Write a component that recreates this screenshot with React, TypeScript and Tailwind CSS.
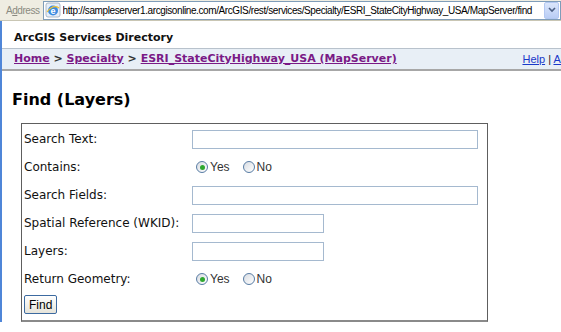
const Radio = ({ checked, label }: { checked?: boolean; label: string }) => (
  <label className="flex items-center mr-[13px]">
    <span className="w-[12px] h-[12px] rounded-full border border-[#587ca4] bg-gradient-to-br from-[#d8dce2] to-white flex items-center justify-center">
      {checked && <span className="w-[5px] h-[5px] rounded-full bg-[#2fa82f]" />}
    </span>
    <span className="ml-[2px] text-[12px] text-[#333]" style={{ fontFamily: '"Liberation Sans", Arial, sans-serif' }}>
      {label}
    </span>
  </label>
);

const Row = ({ label, children }: { label: string; children: React.ReactNode }) => (
  <div className="flex items-center h-[28px]">
    <div className="w-[168px] shrink-0">{label}</div>
    <div className="flex items-center">{children}</div>
  </div>
);

const TextBox = ({ w }: { w: string }) => (
  <input type="text" className={`${w} h-[19px] border border-[#a5b9cf] bg-white outline-none`} />
);

export default function App() {
  return (
    <div className="w-[561px] h-[332px] overflow-hidden bg-white relative" style={{ fontFamily: '"DejaVu Sans", Verdana, sans-serif' }}>
      {/* browser address bar */}
      <div className="h-[21px] bg-[#efede2] border-b border-[#c9c6b4] flex items-center">
        <span className="ml-[6px] mr-[3px] shrink-0 text-[10px] tracking-[-0.45px] text-[#8a8a80]" style={{ fontFamily: '"Liberation Sans", Tahoma, sans-serif' }}>
          A<span className="underline">d</span>dress
        </span>
        <div className="flex-1 min-w-0 h-[19px] border border-[#7f9db9] bg-white flex items-center">
          <svg width="16" height="16" viewBox="0 0 16 16" className="ml-[1px] shrink-0">
            <rect x="1" y="1" width="14" height="14" rx="2" fill="#e6eef8" stroke="#9ab" strokeWidth="0.8" />
            <circle cx="8" cy="8.5" r="5" fill="#3b8be0" />
            <text x="8" y="12" textAnchor="middle" fontSize="9" fontWeight="bold" fill="#fff" fontFamily="Liberation Sans">e</text>
            <path d="M2 10 Q8 2 14 6" fill="none" stroke="#f1c232" strokeWidth="1.2" />
          </svg>
          <span className="ml-[2px] flex-1 min-w-0 overflow-hidden text-[10px] tracking-[-0.4px] text-black whitespace-nowrap" style={{ fontFamily: '"Liberation Sans", Tahoma, sans-serif' }}>
            http://sampleserver1.arcgisonline.com/ArcGIS/rest/services/Specialty/ESRI_StateCityHighway_USA/MapServer/find
          </span>
          <div className="w-[15px] h-[17px] mr-[1px] shrink-0 rounded-[2px] bg-gradient-to-b from-[#dbe6fb] to-[#b9cdf5] border border-[#b3c8f2] flex items-center justify-center">
            <svg width="8" height="6" viewBox="0 0 8 6">
              <path d="M1 1 L4 4 L7 1" fill="none" stroke="#4d6185" strokeWidth="1.6" />
            </svg>
          </div>
        </div>
      </div>

      {/* page */}
      <div className="flex">
        <div className="w-[2px] bg-[#4f86d8] self-stretch" />
        <div className="flex-1">
          <div className="h-[27px] pt-[10px] pl-[12px] text-[11px] leading-[13px] font-bold text-[#111]">
            ArcGIS Services Directory
          </div>
          <div className="h-[23px] bg-[#e8eff6] border-t border-[#b8c2cc] border-b-2 border-b-[#a7a7a7] flex items-center justify-between pl-[12px] whitespace-nowrap">
            <div className="text-[11px] font-bold text-[#333]">
              <a className="text-[#7a1a86] underline">Home</a> &gt; <a className="text-[#7a1a86] underline">Specialty</a> &gt;{' '}
              <a className="text-[#7a1a86] underline">ESRI_StateCityHighway_USA (MapServer)</a>
            </div>
            <div className="text-[11px] text-[#222] mr-[-64px]" style={{ fontFamily: '"Liberation Sans", Tahoma, sans-serif' }}>
              <a className="text-[#1a39c9] underline">Help</a> | <a className="text-[#1a39c9] underline">API Reference</a>
            </div>
          </div>

          <h2 className="mt-[19px] ml-[10px] text-[16px] font-bold text-black leading-[20px]">Find (Layers)</h2>

          <div className="mt-[13px] ml-[19px] w-[467px] h-[199px] border border-[#5e5e5e] border-b-2 border-b-[#8a8a8a] pt-[1px] pl-[2px] text-[12px] text-[#111]">
            <Row label="Search Text:"><TextBox w="w-[286px]" /></Row>
            <Row label="Contains:">
              <span className="ml-[4px] flex"><Radio checked label="Yes" /><Radio label="No" /></span>
            </Row>
            <Row label="Search Fields:"><TextBox w="w-[286px]" /></Row>
            <Row label="Spatial Reference (WKID):"><TextBox w="w-[132px]" /></Row>
            <Row label="Layers:"><TextBox w="w-[132px]" /></Row>
            <Row label="Return Geometry:">
              <span className="ml-[4px] flex"><Radio checked label="Yes" /><Radio label="No" /></span>
            </Row>
            <div className="mt-[2px]">
              <button className="h-[19px] px-[4px] text-[12px] border border-[#3c6aa0] rounded-[2px] bg-gradient-to-b from-white to-[#e6e4da] text-black" style={{ fontFamily: '"Liberation Sans", Tahoma, sans-serif' }}>
                Find
              </button>
            </div>
          </div>
        </div>
      </div>
    </div>
  );
}
